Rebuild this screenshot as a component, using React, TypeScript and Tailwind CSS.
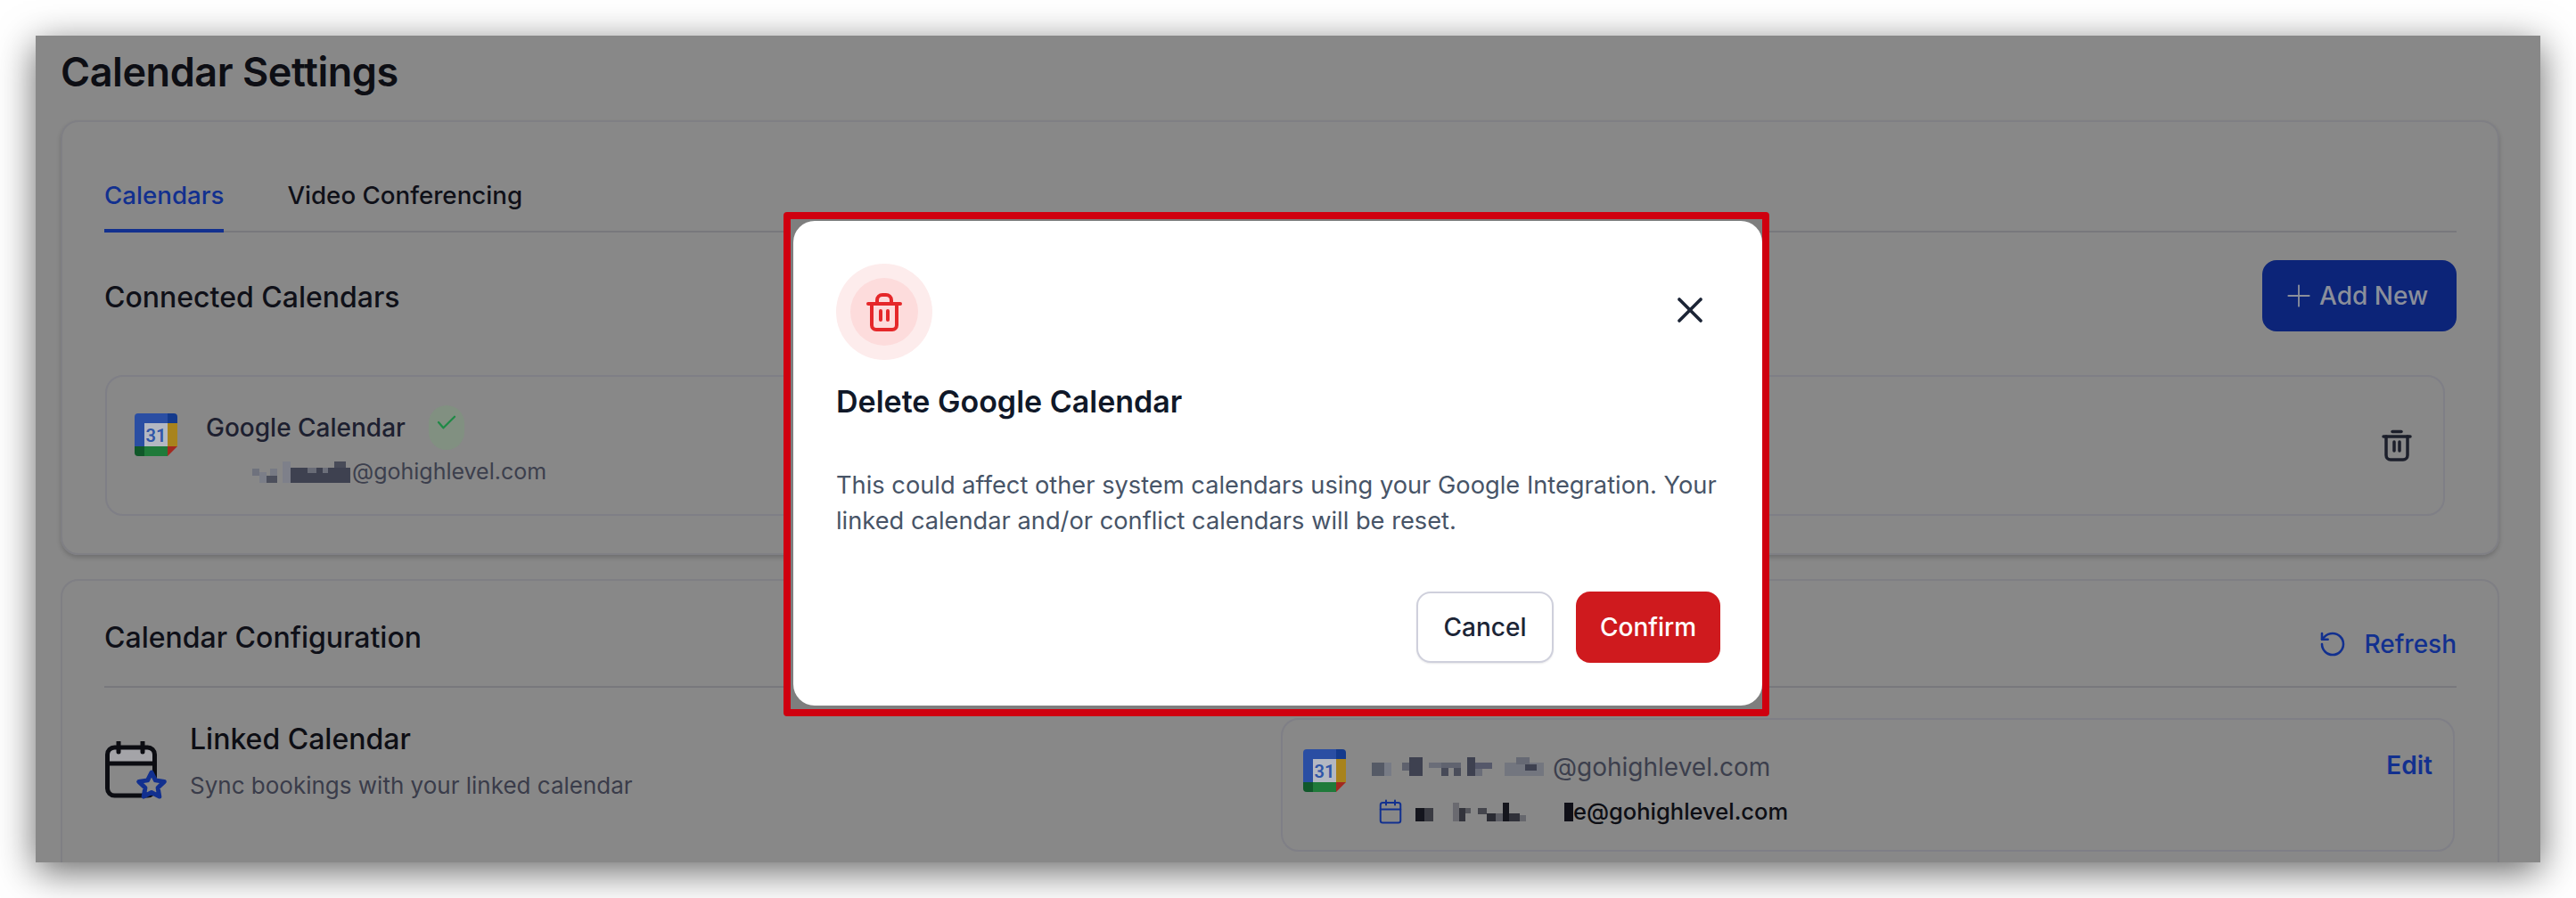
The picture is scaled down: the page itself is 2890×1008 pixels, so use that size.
import { Calendar, Plus, RotateCcw, X } from "lucide-react";

function TrashIcon({ className }: { className: string }) {
  return (
    <svg className={className} viewBox="0 0 40 44" fill="none" stroke="currentColor" strokeWidth={4} strokeLinecap="round" strokeLinejoin="round">
      <path d="M2 13h36" />
      <path d="M6 13v24a5 5 0 0 0 5 5h18a5 5 0 0 0 5-5V13" />
      <path d="M12 13V9a6 6 0 0 1 6-6h4a6 6 0 0 1 6 6v4" />
      <path d="M16 21v10M24 21v10" />
    </svg>
  );
}

function RowTrash() {
  return (
    <svg className="h-[36px] w-[34px] text-[#1c1f2b]" viewBox="0 0 34 36" fill="none" stroke="currentColor" strokeWidth={3.5} strokeLinecap="round" strokeLinejoin="round">
      <path d="M12 2.5h10" />
      <path d="M2 8h30" />
      <path d="M5 8v21a5 5 0 0 0 5 5h14a5 5 0 0 0 5-5V8" />
      <path d="M14 14v10M20 14v10" />
    </svg>
  );
}

function GoogleCalendarIcon() {
  return (
    <svg className="h-[48px] w-[48px] shrink-0" viewBox="0 0 48 48">
      <path d="M4 0h33v11H11v26H0V4a4 4 0 0 1 4-4z" fill="#2a4ea3" />
      <path d="M37 0h7a4 4 0 0 1 4 4v7H37z" fill="#143a8c" />
      <rect x="11" y="11" width="26" height="26" fill="#b4b8c2" />
      <rect x="37" y="11" width="11" height="26" fill="#a8831c" />
      <path d="M0 37h11v11H4a4 4 0 0 1-4-4z" fill="#10582a" />
      <rect x="11" y="37" width="26" height="11" fill="#1f7a3a" />
      <path d="M37 37h11L37 48z" fill="#a3291f" />
      <text x="24" y="32" textAnchor="middle" fontSize="20" fontWeight="600" fill="#2f55a8" fontFamily="Roboto, sans-serif">31</text>
    </svg>
  );
}

function LinkedCalendarIcon() {
  return (
    <svg className="h-[66px] w-[70px] shrink-0" viewBox="0 0 70 66" fill="none" strokeLinecap="round" strokeLinejoin="round">
      <path d="M10 7h38a8 8 0 0 1 8 8v10H2V15a8 8 0 0 1 8-8z" fill="#a4a4a8" />
      <rect x="2.5" y="7" width="53" height="54" rx="8" stroke="#0c0d12" strokeWidth={5} />
      <path d="M2.5 25h53M15 1v11M42 1v11" stroke="#0c0d12" strokeWidth={5} />
      <path
        d="M52 35l4.4 8.9 9.9 1.5-7.2 6.9 1.7 9.8L52 57.5l-8.8 4.6 1.7-9.8-7.2-6.9 9.9-1.5z"
        fill="#888888"
        stroke="#12308f"
        strokeWidth={5}
      />
    </svg>
  );
}

// blurred out parts of the email addresses
type Cell = [number, number, number, number, string];

function Mosaic({ box, cells, className }: { box: [number, number, number, number]; cells: Cell[]; className: string }) {
  return (
    <svg className={className} viewBox={box.join(" ")} shapeRendering="crispEdges">
      {cells.map(([x, y, w, h, fill], i) => (
        <rect key={i} x={x} y={y} width={w} height={h} fill={fill} />
      ))}
    </svg>
  );
}

const rowMosaic: Cell[] = [
  [283, 524, 8, 8, "#6f727d"],
  [291, 528, 8, 12, "#7b7e88"],
  [299, 532, 12, 8, "#4c4f5c"],
  [303, 524, 8, 8, "#777a84"],
  [317, 516, 9, 24, "#7e808a"],
  [326, 523, 67, 17, "#3e4150"],
  [375, 516, 13, 7, "#484b58"],
  [345, 523, 10, 6, "#686b76"],
  [362, 523, 6, 6, "#6c6f7a"],
];

const emailMosaicA: Cell[] = [
  [1539, 856, 14, 15, "#555a66"],
  [1553, 856, 8, 15, "#777b85"],
  [1573, 856, 8, 9, "#5e616d"],
  [1581, 850, 15, 21, "#3e4150"],
  [1603, 856, 14, 6, "#6a6d78"],
  [1617, 856, 22, 6, "#60636f"],
  [1617, 862, 8, 9, "#474a58"],
  [1631, 862, 8, 9, "#4a4d5a"],
  [1646, 850, 9, 21, "#3e4150"],
  [1655, 856, 19, 7, "#55586a"],
  [1655, 863, 8, 8, "#6a6d78"],
  [1688, 856, 44, 15, "#73767f"],
  [1701, 850, 15, 8, "#666974"],
  [1711, 858, 13, 7, "#3e4150"],
];

const emailMosaicB: Cell[] = [
  [1588, 906, 10, 15, "#14151d"],
  [1598, 906, 10, 15, "#3a3b42"],
  [1630, 900, 7, 21, "#6a6a70"],
  [1637, 906, 7, 15, "#33343c"],
  [1644, 906, 6, 6, "#55565c"],
  [1658, 906, 10, 7, "#44454c"],
  [1668, 912, 10, 9, "#2a2b33"],
  [1678, 912, 8, 9, "#5c5d64"],
  [1686, 900, 7, 21, "#15161d"],
  [1693, 912, 12, 9, "#303139"],
  [1705, 914, 7, 7, "#66676d"],
];

export default function App() {
  return (
    <div className="h-screen w-full overflow-hidden bg-white p-[40px] [font-family:Inter,sans-serif]">
      <div className="relative h-[928px] overflow-hidden bg-[#888888] pr-[46px] pl-[28px] shadow-[0_10px_40px_rgba(0,0,0,0.6)]">
        <h1 className="pt-[14px] text-[45px] leading-[54px] font-semibold tracking-[-0.01em] text-[#0d0e14]">Calendar Settings</h1>

        {/* Connected calendars */}
        <section className="mt-[27px] h-[488px] rounded-[20px] border-2 border-[#7f7f84] pr-[46px] pl-[47px] shadow-[0_3px_5px_rgba(0,0,0,0.18)]">
          <div className="mt-[62px] flex h-[62px] gap-[71px] border-b-2 border-[#78787c] text-[27.7px] leading-[40px] font-medium">
            <div className="h-[62px] border-b-4 border-[#12308f] text-[#12308f]">Calendars</div>
            <div className="text-[#0f1018]">Video Conferencing</div>
          </div>

          <div className="mt-[31px] flex h-[80px] items-center justify-between">
            <h2 className="pt-[4px] text-[32px] leading-[40px] font-medium text-[#0f1018]">Connected Calendars</h2>
            <button className="flex h-[80px] w-[218px] items-center gap-[3px] rounded-[16px] bg-[#0c2478] pl-[21px] text-[28px] font-medium text-[#8b8f9b]">
              <Plus size={40} strokeWidth={1.1} />
              Add New
            </button>
          </div>

          <div className="mt-[49px] mr-[13px] ml-[1px] flex h-[158px] items-center justify-between rounded-[20px] border-2 border-[#7f7f86] pr-[35px] pl-[31px]">
            <div className="flex gap-[32px] self-start">
              <div className="pt-[41px]">
                <GoogleCalendarIcon />
              </div>
              <div className="pt-[32px]">
                <div className="flex items-center gap-[26px]">
                  <span className="text-[28px] leading-[40px] font-medium text-[#1d2030]">Google Calendar</span>
                  <span className="flex h-[50px] w-[40px] items-start justify-center rounded-full bg-[#819081] pt-[10px]">
                    <svg className="h-[18px] w-[24px]" viewBox="0 0 26 20" fill="none" stroke="#1f8a46" strokeWidth={2.5} strokeLinecap="round" strokeLinejoin="round">
                      <path d="M3 10l6 7L23 3" />
                    </svg>
                  </span>
                </div>
                <div className="mt-[7px] ml-[52px] flex h-[36px] items-center">
                  <Mosaic className="h-[24px] w-[112px]" box={[283, 516, 112, 24]} cells={rowMosaic} />
                  <span className="text-[25px] text-[#3c3f4d]">@gohighlevel.com</span>
                </div>
              </div>
            </div>
            <RowTrash />
          </div>
        </section>

        {/* Calendar configuration */}
        <section className="mt-[27px] h-[400px] rounded-[20px] border-2 border-[#7f7f84] pr-[46px] pl-[47px]">
          <div className="flex h-[120px] justify-between border-b-2 border-[#78787c] pt-[44px]">
            <h2 className="text-[32px] leading-[40px] font-medium text-[#0f1018]">Calendar Configuration</h2>
            <button className="mt-[7px] flex h-[40px] items-center gap-[20px] text-[28px] font-medium text-[#12308f]">
              <RotateCcw size={32} strokeWidth={1.9} />
              Refresh
            </button>
          </div>

          <div className="mt-[34px] flex justify-between">
            <div className="ml-[1px] flex gap-[25px]">
              <div className="pt-[26px]">
                <LinkedCalendarIcon />
              </div>
              <div className="pt-[2px]">
                <div className="text-[32px] leading-[44px] font-medium text-[#0d0e14]">Linked Calendar</div>
                <div className="mt-[12px] text-[26px] leading-[36px] text-[#3a3c4a]">Sync bookings with your linked calendar</div>
              </div>
            </div>

            <div className="mr-[2px] flex h-[150px] w-[1317px] justify-between rounded-[20px] border-2 border-[#7f7f86] pr-[23px] pl-[23px]">
              <div className="flex gap-[29px]">
                <div className="pt-[33px]">
                  <GoogleCalendarIcon />
                </div>
                <div className="pt-[35px]">
                  <div className="flex h-[36px] items-center">
                    <Mosaic className="h-[22px] w-[203px]" box={[1539, 850, 203, 22]} cells={emailMosaicA} />
                    <span className="text-[28px] text-[#3c3f4d]">@gohighlevel.com</span>
                  </div>
                  <div className="mt-[14px] ml-[6px] flex h-[36px] items-center">
                    <Calendar size={30} strokeWidth={1.6} className="text-[#12308f]" />
                    <Mosaic className="ml-[13px] h-[21px] w-[124px]" box={[1588, 900, 124, 21]} cells={emailMosaicB} />
                    <span className="ml-[43px] h-[21px] w-[10px] bg-[#101018]" />
                    <span className="text-[25.5px] font-medium text-[#0d0e14]">e@gohighlevel.com</span>
                  </div>
                </div>
              </div>
              <span className="mt-[33px] text-[28px] leading-[36px] font-semibold text-[#12308f]">Edit</span>
            </div>
          </div>
        </section>

        {/* Confirm dialog with the red highlight around it */}
        <div className="absolute top-[198px] left-[839px] h-[566px] w-[1106px] rounded-[4px] border-8 border-[#cf000f] bg-[#7e7e7e] pt-[2px] pl-[3px]">
          <div className="h-[544px] w-[1087px] rounded-[24px] bg-white pt-[48px] pr-[47px] pl-[48px]">
            <div className="flex items-center justify-between">
              <div className="flex h-[108px] w-[108px] items-center justify-center rounded-full bg-[#fdecec]">
                <div className="flex h-[76px] w-[76px] items-center justify-center rounded-full bg-[#fddcdc]">
                  <TrashIcon className="h-[44px] w-[40px] text-[#e5282a]" />
                </div>
              </div>
              <X size={48} strokeWidth={1.9} className="mr-[10px] -mt-[4px] text-[#1c2536]" />
            </div>
            <h3 className="mt-[25px] text-[34px] leading-[44px] font-semibold text-[#101828]">Delete Google Calendar</h3>
            <p className="mt-[52px] w-[1010px] text-[27.25px] leading-[40px] text-[#475467]">
              This could affect other system calendars using your Google Integration. Your linked calendar and/or conflict calendars will be reset.
            </p>
            <div className="mt-[59px] flex justify-end gap-[25px]">
              <button className="h-[80px] w-[154px] rounded-[16px] border-2 border-[#cfd0dc] bg-white text-[28px] font-medium text-[#1c2536] shadow-[0_1px_2px_rgba(16,24,40,0.1)]">
                Cancel
              </button>
              <button className="h-[80px] w-[162px] rounded-[16px] bg-[#cf1a1e] text-[28px] font-medium text-white">Confirm</button>
            </div>
          </div>
        </div>
      </div>
    </div>
  );
}
